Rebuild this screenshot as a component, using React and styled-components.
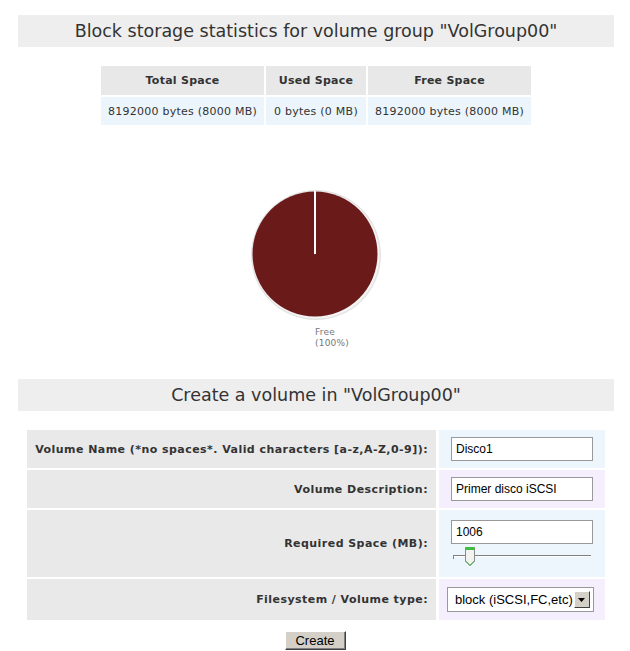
import React, { useState } from 'react';
import styled, { createGlobalStyle } from 'styled-components';

const GlobalStyle = createGlobalStyle`
  html, body {
    margin: 0;
    padding: 0;
    background: #ffffff;
    font-family: 'DejaVu Sans', Verdana, sans-serif;
    color: #333333;
  }
`;

const Page = styled.div`
  width: 596px;
  padding: 15px 16px 0 18px;
`;

const SectionTitle = styled.div`
  height: 32px;
  background: #eeeeee;
  display: flex;
  align-items: center;
  justify-content: center;
  font-size: 17.5px;
  color: #333333;
`;

const StatsTable = styled.table`
  margin: 17px auto 0;
  border-spacing: 2px;
  font-size: 11px;
  letter-spacing: 0.25px;
`;

const StatsHead = styled.th`
  background: #e8e8e8;
  height: 29px;
  padding: 0;
  font-weight: bold;
  color: #333333;
  width: ${props => props.$w}px;
`;

const StatsCell = styled.td`
  background: #edf5fc;
  height: 28px;
  padding: 0;
  text-align: center;
  color: #333333;
`;

const ChartArea = styled.div`
  display: flex;
  justify-content: center;
  padding-top: 62px;
  height: 190px;
`;

const ChartBox = styled.div`
  position: relative;
  width: 132px;
  height: 132px;
`;

const ChartLabel = styled.div`
  position: absolute;
  left: 65px;
  top: 138px;
  font-size: 9px;
  line-height: 11px;
  letter-spacing: 0.2px;
  color: #777777;
  white-space: nowrap;
`;

const FormTable = styled.table`
  margin: 17px auto 0;
  border-spacing: 3px 2px;
  font-size: 11px;
`;

const LabelCell = styled.td`
  width: 401px;
  height: ${props => props.$h}px;
  background: #e9e9e9;
  text-align: right;
  padding: 0 8px 0 0;
  font-weight: bold;
  letter-spacing: 0.45px;
  color: #333333;
`;

const ValueCell = styled.td`
  width: 154px;
  background: ${props => (props.$alt ? '#f5eefd' : '#edf5fd')};
  padding: 0 0 0 12px;
  vertical-align: middle;
`;

const TextInput = styled.input`
  box-sizing: border-box;
  width: 142px;
  height: 24px;
  border: 1px solid #999999;
  padding: 0 4px;
  font-family: 'Liberation Sans', Arial, sans-serif;
  font-size: 12px;
  color: #000000;
  background: #ffffff;
  outline: none;
`;

const SliderRow = styled.div`
  position: relative;
  width: 140px;
  height: 22px;
  margin-top: 2px;
`;

const SliderTrack = styled.div`
  position: absolute;
  left: 2px;
  right: 0;
  top: 9px;
  height: 1px;
  background: #808080;
  border-bottom: 1px solid #ffffff;

  &::before {
    content: '';
    position: absolute;
    left: 0;
    top: 0;
    width: 1px;
    height: 4px;
    background: #808080;
  }
`;

const SliderThumb = styled.svg`
  position: absolute;
  top: 0;
`;

const SelectBox = styled.div`
  box-sizing: border-box;
  width: 147px;
  height: 25px;
  margin-left: -4px;
  border: 1px solid #999999;
  background: #ffffff;
  display: flex;
  align-items: center;
  padding-left: 7px;
  font-family: 'Liberation Sans', Arial, sans-serif;
  font-size: 13px;
  color: #000000;
  white-space: nowrap;
`;

const SelectArrow = styled.span`
  box-sizing: border-box;
  width: 16px;
  height: 17px;
  margin-left: 1px;
  background: #d4d0c8;
  border: 1px solid;
  border-color: #ffffff #404040 #404040 #ffffff;
  display: flex;
  align-items: center;
  justify-content: center;
`;

const Actions = styled.div`
  display: flex;
  justify-content: center;
  padding-top: 9px;
`;

const Button = styled.button`
  box-sizing: border-box;
  width: 61px;
  height: 19px;
  margin-left: -2px;
  padding: 0;
  background: #d4d0c8;
  border: 1px solid;
  border-color: #ffffff #404040 #404040 #ffffff;
  box-shadow: inset -1px -1px 0 #808080;
  font-family: 'Liberation Sans', Arial, sans-serif;
  font-size: 13px;
  color: #000000;
`;

function PieChart() {
  return (
    <svg width="132" height="132" viewBox="0 0 132 132">
      <circle cx="66" cy="66" r="65" fill="#e4e4e4" />
      <circle cx="66" cy="66" r="63.5" fill="#f4f4f4" />
      <circle cx="65" cy="65" r="62.5" fill="#6b1a1a" />
      <line x1="65" y1="2" x2="65" y2="65" stroke="#ffffff" strokeWidth="2" />
    </svg>
  );
}

function Slider({ value, max }) {
  const pos = Math.round((value / max) * 128) - 3;
  return (
    <SliderRow>
      <SliderTrack />
      <SliderThumb width="12" height="21" viewBox="0 0 12 21" style={{ left: pos }}>
        <path d="M1.5 1.5 H10.5 V15 L6 19.5 L1.5 15 Z" fill="#f2f2ee" stroke="#8a8a8a" />
        <rect x="1.5" y="1" width="9" height="3" fill="#3fbf3f" />
        <path d="M1.5 15 L6 19.5 L10.5 15" fill="none" stroke="#3aa63a" />
      </SliderThumb>
    </SliderRow>
  );
}

const stats = [
  { title: 'Total Space', w: 163, value: '8192000 bytes (8000 MB)' },
  { title: 'Used Space', w: 100, value: '0 bytes (0 MB)' },
  { title: 'Free Space', w: 163, value: '8192000 bytes (8000 MB)' },
];

export default function App() {
  const [name, setName] = useState('Disco1');
  const [desc, setDesc] = useState('Primer disco iSCSI');
  const [size, setSize] = useState('1006');

  return (
    <Page>
      <GlobalStyle />
      <SectionTitle>Block storage statistics for volume group "VolGroup00"</SectionTitle>

      <StatsTable>
        <thead>
          <tr>
            {stats.map(s => (
              <StatsHead key={s.title} $w={s.w}>{s.title}</StatsHead>
            ))}
          </tr>
        </thead>
        <tbody>
          <tr>
            {stats.map(s => (
              <StatsCell key={s.title}>{s.value}</StatsCell>
            ))}
          </tr>
        </tbody>
      </StatsTable>

      <ChartArea>
        <ChartBox>
          <PieChart />
          <ChartLabel>
            Free
            <br />
            (100%)
          </ChartLabel>
        </ChartBox>
      </ChartArea>

      <SectionTitle>Create a volume in "VolGroup00"</SectionTitle>

      <FormTable>
        <tbody>
          <tr>
            <LabelCell $h={38}>Volume Name (*no spaces*. Valid characters [a-z,A-Z,0-9]):</LabelCell>
            <ValueCell>
              <TextInput value={name} onChange={e => setName(e.target.value)} />
            </ValueCell>
          </tr>
          <tr>
            <LabelCell $h={38}>Volume Description:</LabelCell>
            <ValueCell $alt>
              <TextInput value={desc} onChange={e => setDesc(e.target.value)} />
            </ValueCell>
          </tr>
          <tr>
            <LabelCell $h={67}>Required Space (MB):</LabelCell>
            <ValueCell>
              <TextInput value={size} onChange={e => setSize(e.target.value)} />
              <Slider value={Number(size) || 0} max={8000} />
            </ValueCell>
          </tr>
          <tr>
            <LabelCell $h={41}>Filesystem / Volume type:</LabelCell>
            <ValueCell $alt>
              <SelectBox>
                block (iSCSI,FC,etc)
                <SelectArrow>
                  <svg width="7" height="4" viewBox="0 0 7 4">
                    <path d="M0 0 H7 L3.5 4 Z" fill="#000000" />
                  </svg>
                </SelectArrow>
              </SelectBox>
            </ValueCell>
          </tr>
        </tbody>
      </FormTable>

      <Actions>
        <Button>Create</Button>
      </Actions>
    </Page>
  );
}
